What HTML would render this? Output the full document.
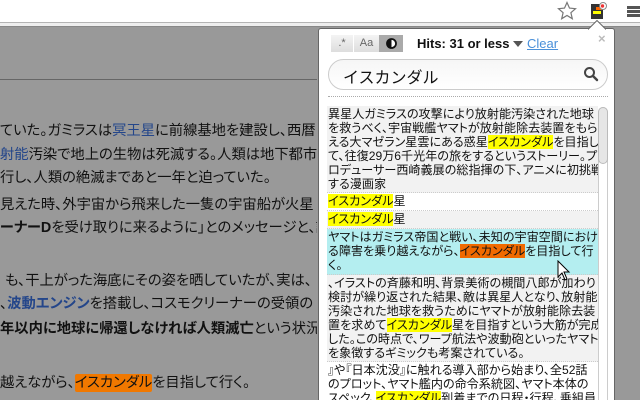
<!DOCTYPE html>
<html><head><meta charset="utf-8"><style>
*{margin:0;padding:0;box-sizing:border-box}
html{width:640px;height:400px;overflow:hidden}
body{width:640px;height:400px;overflow:hidden;position:relative;background:#999;font-family:"Liberation Sans","Noto Sans CJK JP",sans-serif}
.tb{position:absolute;left:0;top:0;width:640px;height:23px;background:#fff;border-bottom:1px solid #b4b4b4}
.strip{position:absolute;left:0;top:23px;width:640px;height:4px;background:#eee;border-bottom:1px solid #888}
.bl{position:absolute;left:0;white-space:nowrap;font-size:14.3px;color:#111;line-height:20px;font-feature-settings:"palt"}
.lk{color:#24468a}
.b{font-weight:bold}
.pop{position:absolute;left:318px;top:28px;width:297px;height:380px;background:#fff;border:1px solid #666;border-radius:3px;overflow:hidden}
.btn{position:absolute;top:6px;height:17px;font-size:11px;line-height:17px;text-align:center;color:#666;background:linear-gradient(#f4f4f4,#ddd)}
.res{position:absolute;left:8px;top:77px;width:271px;font-size:12.1px;line-height:13.9px;color:#111;white-space:nowrap;overflow:hidden;font-feature-settings:"palt"}
.e{padding:2px 0 1px 1px;border-bottom:1px dotted #ccc}
.y{background:#ff0}.o{background:#f06a00}
</style></head><body>
<div class="tb"></div>
<div class="strip"></div>
<div style="position:absolute;left:0;top:79px;width:318px;height:1px;background:#666"></div>
<svg style="position:absolute;left:557px;top:1px" width="20" height="20" viewBox="0 0 20 20"><path d="M10 1.5l2.5 5.6 6 .6-4.6 4 1.4 6-5.3-3.2-5.3 3.2 1.4-6-4.6-4 6-.6z" fill="#fff" stroke="#777" stroke-width="1.2"/></svg>
<svg style="position:absolute;left:589px;top:1px" width="22" height="20" viewBox="0 0 22 20"><rect x="2" y="3" width="12" height="15" fill="#333"/><rect x="4" y="10" width="8" height="3" fill="#ff0"/><rect x="7" y="6" width="6" height="3" fill="#f60"/><circle cx="14" cy="5" r="3.5" fill="#fff" stroke="#888"/><circle cx="13.5" cy="5" r="1.7" fill="#e33"/></svg>
<div style="position:absolute;left:627px;top:6px;width:13px;height:3px;background:#555;box-shadow:0 4px 0 #555,0 8px 0 #555"></div>
<div class="bl" style="top:121px;left:0">ていた。ガミラスは<span class="lk">冥王星</span>に前線基地を建設し、西暦</div>
<div class="bl" style="top:145px;left:0"><span class="lk">射能</span>汚染で地上の生物は死滅する。人類は地下都市</div>
<div class="bl" style="top:168px;left:0">行し、人類の絶滅まであと一年と迫っていた。</div>
<div class="bl" style="top:195px;left:0">見えた時、外宇宙から飛来した一隻の宇宙船が火星</div>
<div class="bl" style="top:218px;left:0"><span class="b">ーナーD</span>を受け取りに来るように」とのメッセージと、設</div>
<div class="bl" style="top:271px;left:5px">も、干上がった海底にその姿を晒していたが、実は、</div>
<div class="bl" style="top:294px;left:0">、<span class="lk b">波動エンジン</span>を搭載し、コスモクリーナーの受領の</div>
<div class="bl" style="top:319px;left:0"><span class="b">年以内に地球に帰還しなければ人類滅亡</span>という状況下</div>
<div class="bl" style="top:373px;left:0">越えながら、<span style="background:#f07800;border-radius:2px;padding:1px 0">イスカンダル</span>を目指して行く。</div>
<div style="position:absolute;left:317px;top:28px;width:1px;height:372px;background:#999"></div>
<div class="pop">
 <div class="btn" style="left:12px;width:22px">.*</div>
 <div class="btn" style="left:35px;width:25px">Aa</div>
 <div class="btn" style="left:60px;width:24px;background:#aaa"><svg style="position:absolute;left:7px;top:3px" width="11" height="11" viewBox="0 0 11 11"><circle cx="5.5" cy="5.5" r="4.5" fill="#fff" stroke="#111" stroke-width="1.8"/><path d="M5.5 1a4.5 4.5 0 0 0 0 9z" fill="#111"/></svg></div>
 <div style="position:absolute;left:98px;top:7px;font-size:13px;font-weight:bold;color:#111">Hits: 31 or less</div>
 <svg style="position:absolute;left:194px;top:12px" width="10" height="6" viewBox="0 0 10 6"><path d="M0 0h10L5 6z" fill="#555"/></svg>
 <div style="position:absolute;left:208px;top:7px;font-size:13px;color:#4a90d9;text-decoration:underline">Clear</div>
 <div style="position:absolute;left:279px;top:2px;font-size:13px;font-weight:bold;color:#bbb">×</div>
 <div style="position:absolute;left:9px;top:30px;width:280px;height:31px;border:1px solid #ccc;border-radius:16px;background:linear-gradient(#f6f6f6,#fff)"></div>
 <div style="position:absolute;left:24px;top:35px;font-size:16px;color:#111">イスカンダル</div>
 <svg style="position:absolute;left:264px;top:37px" width="16" height="16" viewBox="0 0 16 16"><circle cx="6.5" cy="6.5" r="4.5" fill="none" stroke="#444" stroke-width="2"/><path d="M10 10l4 4" stroke="#444" stroke-width="2.4" stroke-linecap="round"/></svg>
 <div style="position:absolute;left:9px;top:67px;width:280px;border-top:1px dotted #aaa"></div>
 <div style="position:absolute;left:279px;top:78px;width:10px;height:300px;border:1px solid #ccc;border-radius:5px;background:#fff"></div>
 <div style="position:absolute;left:279px;top:78px;width:10px;height:57px;border:1px solid #bbb;border-radius:5px;background:#e6e6e6"></div>
 <div class="res">
  <div class="e" style="background:#f2f2f2">異星人ガミラスの攻撃により放射能汚染された地球<br>を救うべく、宇宙戦艦ヤマトが放射能除去装置をもら<br>える大マゼラン星雲にある惑星<span class="y">イスカンダル</span>を目指し<br>て、往復29万6千光年の旅をするというストーリー。プ<br>ロデューサー西崎義展の総指揮の下、アニメに初挑戦<br>する漫画家</div>
  <div class="e" style="background:#fff"><span class="y">イスカンダル</span>星</div>
  <div class="e" style="background:#f2f2f2"><span class="y">イスカンダル</span>星</div>
  <div class="e" style="background:#b4eef0">ヤマトはガミラス帝国と戦い、未知の宇宙空間におけ<br>る障害を乗り越えながら、<span class="o">イスカンダル</span>を目指して行<br>く。</div>
  <div class="e" style="background:#f2f2f2">、イラストの斉藤和明、背景美術の槻間八郎が加わり<br>検討が繰り返された結果、敵は異星人となり、放射能<br>汚染された地球を救うためにヤマトが放射能除去装<br>置を求めて<span class="y">イスカンダル</span>星を目指すという大筋が完成<br>した。この時点で、ワープ航法や波動砲といったヤマト<br>を象徴するギミックも考案されている。</div>
  <div class="e" style="background:#fff">』や『日本沈没』に触れる導入部から始まり、全52話<br>のプロット、ヤマト艦内の命令系統図、ヤマト本体の<br>スペック、<span class="y">イスカンダル</span>到着までの日程・行程、乗組員</div>
 </div>
</div>
<svg style="position:absolute;left:588px;top:20px" width="18" height="10" viewBox="0 0 18 10"><path d="M0 9.5L9 .5 18 9.5" fill="#fff" stroke="#666"/><rect x="1" y="9" width="16" height="2" fill="#fff"/></svg>
<svg style="position:absolute;left:557px;top:260px" width="14" height="22" viewBox="0 0 14 22"><path d="M1 1v16l4-4 3 7 2-1-3-7h5z" fill="#fff" stroke="#000"/></svg>
</body></html>
